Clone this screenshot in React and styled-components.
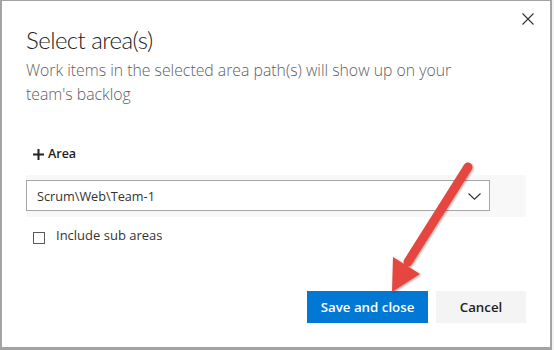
import React from "react";
import styled, { createGlobalStyle } from "styled-components";

const Global = createGlobalStyle`
  html, body { margin: 0; padding: 0; background: #f3f3f3; }
  body { font-family: "Open Sans", "Noto Sans", sans-serif; }
  * { box-sizing: border-box; }
`;

const Page = styled.div`
  position: relative;
  width: 554px;
  height: 350px;
  overflow: hidden;
`;

const Dialog = styled.div`
  width: 552px;
  height: 350px;
  background: #ffffff;
  border-style: solid;
  border-color: #a3a3a3;
  border-width: 1px 2px 3px 2px;
  padding: 0 24px 24px 24px;
  display: flex;
  flex-direction: column;
`;

const Header = styled.div`
  display: flex;
  justify-content: space-between;
  align-items: flex-start;
`;

const HeadText = styled.div`
  padding-top: 23px;
  display: flex;
  flex-direction: column;
`;

const Title = styled.h1`
  margin: 0;
  font-family: Lato, "Open Sans", sans-serif;
  font-size: 24px;
  letter-spacing: -0.55px;
  line-height: 32px;
  font-weight: 300;
  color: #222;
`;

const Subtitle = styled.p`
  margin: 2px 0 0 0;
  width: 445px;
  font-size: 15.8px;
  line-height: 24px;
  font-weight: 300;
  color: #606060;
`;

const CloseButton = styled.button`
  width: 28px;
  height: 28px;
  margin: 4px -16px 0 0;
  padding: 0;
  border: none;
  background: transparent;
  display: flex;
  align-items: center;
  justify-content: center;
`;

const AddButton = styled.button`
  align-self: flex-start;
  margin-top: 38px;
  margin-left: 7px;
  height: 20px;
  padding: 0;
  border: none;
  background: transparent;
  display: flex;
  align-items: center;
  gap: 4px;
  font-family: inherit;
  font-size: 12.5px;
  line-height: 20px;
  font-weight: 600;
  color: #222;
`;

const Band = styled.div`
  margin-top: 11px;
  background: #f8f8f8;
  padding: 5px 36px 6px 0;
`;

const Select = styled.div`
  height: 31px;
  border: 1px solid #a6a6a6;
  background: #fff;
  display: flex;
  align-items: center;
  justify-content: space-between;
  padding: 1px 8px 0 10px;
  font-size: 12.7px;
  color: #333;
`;

const CheckRow = styled.label`
  margin-top: 8px;
  margin-left: 7px;
  display: flex;
  align-items: flex-start;
  gap: 11px;
  font-size: 13px;
  line-height: 20px;
  color: #333;
`;

const Box = styled.span`
  width: 12px;
  height: 12px;
  margin-top: 7px;
  border: 1px solid #5a5a5a;
  background: #fff;
`;

const Footer = styled.div`
  margin-top: auto;
  display: flex;
  justify-content: flex-end;
  gap: 8px;
`;

const Button = styled.button`
  height: 32px;
  width: ${(p) => p.$w}px;
  border: none;
  padding: 0;
  font-family: inherit;
  font-size: 13.3px;
  font-weight: 600;
  background: ${(p) => (p.$primary ? "#0078d4" : "#f4f4f4")};
  color: ${(p) => (p.$primary ? "#ffffff" : "#222")};
`;

const Overlay = styled.svg`
  position: absolute;
  left: 0;
  top: 0;
  pointer-events: none;
`;

export default function App() {
  return (
    <Page>
      <Global />
      <Dialog>
        <Header>
          <HeadText>
            <Title>Select area(s)</Title>
            <Subtitle>
              Work items in the selected area path(s) will show up on your team's backlog
            </Subtitle>
          </HeadText>
          <CloseButton aria-label="Close">
            <svg width="12" height="12" viewBox="0 0 12 12">
              <path d="M0.5 0.5 L11.5 11.5 M11.5 0.5 L0.5 11.5" stroke="#333" strokeWidth="1.1" fill="none" />
            </svg>
          </CloseButton>
        </Header>
        <AddButton>
          <svg width="11" height="11" viewBox="0 0 11 11">
            <path d="M5.5 0 V11 M0 5.5 H11" stroke="#222" strokeWidth="2" fill="none" />
          </svg>
          Area
        </AddButton>
        <Band>
          <Select>
            <span>Scrum\Web\Team-1</span>
            <svg width="13" height="7" viewBox="0 0 13 7">
              <path d="M0.5 0.5 L6.5 6.2 L12.5 0.5" stroke="#333" strokeWidth="1.1" fill="none" />
            </svg>
          </Select>
        </Band>
        <CheckRow>
          <Box />
          Include sub areas
        </CheckRow>
        <Footer>
          <Button $primary $w={121}>Save and close</Button>
          <Button $w={90}>Cancel</Button>
        </Footer>
      </Dialog>
      <Overlay width="554" height="350" viewBox="0 0 554 350">
        <defs>
          <filter id="sh" x="-20%" y="-20%" width="140%" height="140%">
            <feDropShadow dx="1" dy="1" stdDeviation="1.2" floodColor="#000" floodOpacity="0.35" />
          </filter>
        </defs>
        <g filter="url(#sh)">
          <line x1="468" y1="167" x2="408" y2="262" stroke="#e5473f" strokeWidth="9" strokeLinecap="round" />
          <polygon points="392,292 393,257 420,274" fill="#e5473f" />
        </g>
      </Overlay>
    </Page>
  );
}
